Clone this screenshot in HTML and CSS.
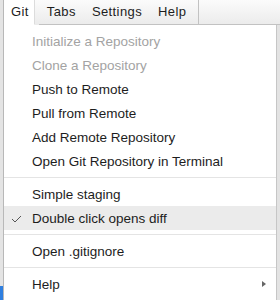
FILE: index.html
```html
<!DOCTYPE html>
<html>
<head>
<meta charset="utf-8">
<link rel="stylesheet" href="styles.css">
</head>
<body>
<div class="strip"><div class="strip-fill"></div><div class="strip-blue"></div></div>
<div class="main">
  <div class="menubar">
    <div class="mi active">Git</div>
    <div class="mi">Tabs</div>
    <div class="mi">Settings</div>
    <div class="mi last">Help</div>
    <div class="fill"></div>
  </div>
  <div class="below">
    <div class="menu">
      <div class="item disabled">Initialize a Repository</div>
      <div class="item disabled">Clone a Repository</div>
      <div class="item">Push to Remote</div>
      <div class="item">Pull from Remote</div>
      <div class="item">Add Remote Repository</div>
      <div class="item">Open Git Repository in Terminal</div>
      <div class="sep"></div>
      <div class="item">Simple staging</div>
      <div class="item hover"><svg class="check" width="28" height="24" viewBox="0 0 28 24"><polyline points="8,13 11,16 17,10" fill="none" stroke="#555" stroke-width="1"/></svg>Double click opens diff</div>
      <div class="sep"></div>
      <div class="item">Open .gitignore</div>
      <div class="sep"></div>
      <div class="item">Help<span class="arrow"></span></div>
    </div>
    <div class="shade"></div>
  </div>
</div>
</body>
</html>
```
FILE: styles.css
```css
html, body {
  margin: 0;
  padding: 0;
}
body {
  width: 280px;
  height: 300px;
  overflow: hidden;
  display: flex;
  background: #fff;
  font-family: "Liberation Sans", Arial, sans-serif;
  font-size: 13px;
  color: #1d1d1d;
}
.strip {
  width: 3px;
  border-right: 1px solid #b8b8b8;
  display: flex;
  flex-direction: column;
}
.strip-fill {
  flex: 1;
  background: #e4e4e4;
}
.strip-blue {
  height: 14px;
  background: #2f7fe0;
}
.main {
  flex: 1;
  display: flex;
  flex-direction: column;
}
.menubar {
  display: flex;
  height: 25px;
  background: linear-gradient(#fbfbfb, #ebebeb);
  letter-spacing: 0.4px;
}
.mi {
  line-height: 24px;
  padding: 0 8px;
  border-bottom: 1px solid #c2c2c2;
  white-space: nowrap;
}
.mi.active {
  background: #fff;
  border-bottom-color: #fff;
  border-right: 1px solid #dcdcdc;
  padding: 0 5px 0 7px;
  margin-right: 4px;
}
.mi.last {
  border-right: 1px solid #c2c2c2;
  padding-right: 12px;
}
.fill {
  flex: 1;
  border-bottom: 1px solid #c2c2c2;
}
.below {
  flex: 1;
  display: flex;
}
.menu {
  width: 272px;
  border-right: 1px solid #c6c6c6;
  padding-top: 4px;
  background: #fff;
  font-size: 13.5px;
}
.shade {
  flex: 1;
  background: #e3e3e3;
}
.item {
  position: relative;
  display: flex;
  align-items: center;
  height: 24px;
  padding-left: 28px;
  white-space: nowrap;
}
.item.disabled {
  color: #a3a3a3;
}
.item.hover {
  background: #ebebeb;
}
.check {
  position: absolute;
  left: 0;
  top: 0;
}
.sep {
  height: 1px;
  margin: 4px 0;
  background: #e4e4e4;
}
.arrow {
  margin-left: auto;
  margin-right: 10px;
  width: 0;
  height: 0;
  border-top: 3px solid transparent;
  border-bottom: 3px solid transparent;
  border-left: 4px solid #666;
}
```
